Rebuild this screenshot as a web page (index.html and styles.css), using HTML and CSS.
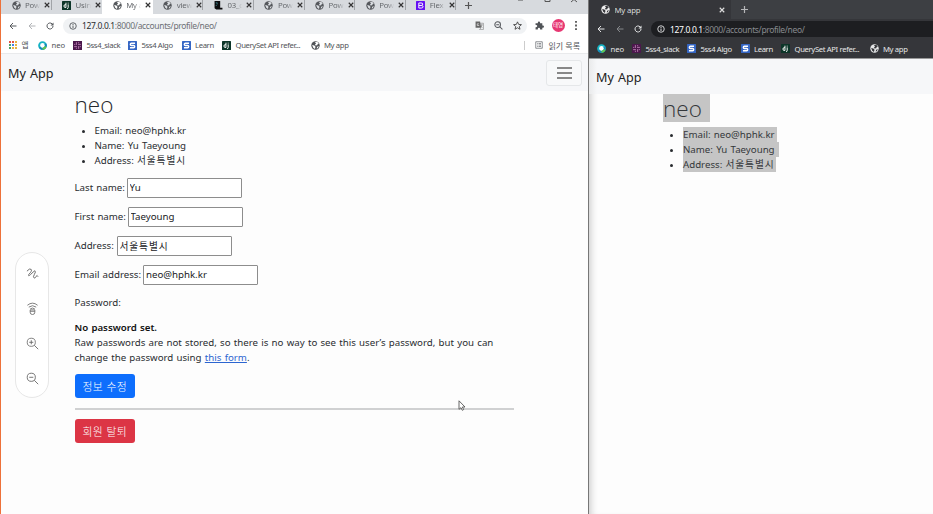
FILE: index.html
```
<!DOCTYPE html>
<html lang="ko">
<head>
<meta charset="utf-8">
<title>My app</title>
<link rel="stylesheet" href="styles.css">
</head>
<body>
<svg class="defs" aria-hidden="true">
  <symbol id="globe" viewBox="0 0 16 16"><circle cx="8" cy="8" r="7.5" fill="currentColor"/><path class="land" d="M2 7l4 1 2 2-1 4-3-2zM7 2l4-.5 3 3-2 1-1 2-3 .5-1-2 2-1zM11 10l3-1-2 4-2 .5z"/></symbol>
  <symbol id="dj" viewBox="0 0 16 16"><rect width="16" height="16" rx="1" fill="#0c3528"/><path d="M7 3v8.500M7 6.500H5.500Q3.500 6.500 3.500 9T5.500 11.500H7M11 6v5.500Q11 13.500 9 13.500M11 3v1.500" fill="none" stroke="#fff" stroke-width="1.700"/></symbol>
  <symbol id="slack" viewBox="0 0 16 16"><rect width="16" height="16" fill="#4b184c"/><path d="M6 2v5M10 2v2M2 6h2M9 6h5M2 10h5M12 10h2M6 12v2M10 9v5" stroke="#b87bb0" stroke-width="1.700"/></symbol>
  <symbol id="s" viewBox="0 0 16 16"><rect width="16" height="16" rx="1" fill="#3566c4"/><path d="M12.500 4H6Q4 4 4 6t2 2h4q2 0 2 2t-2 2H3.500" fill="none" stroke="#fff" stroke-width="2.300"/></symbol>
  <symbol id="ring" viewBox="0 0 16 16"><circle cx="8" cy="8" r="6" fill="#fff" stroke="#15b4c4" stroke-width="3.500"/><path d="M3 11a5.800 5.800 0 0 0 10-6" fill="none" stroke="#1589bd" stroke-width="3.500"/><path d="M8 13.800a5.800 5.800 0 0 0 5.500-4" fill="none" stroke="#65c94b" stroke-width="3.500"/></symbol>
  <symbol id="term" viewBox="0 0 16 16"><path d="M1 0h10v12h4v3H4L1 13z" fill="#0b0b0d"/><path d="M3 3h3M4 5h3M3 8h2" stroke="#4dafbd"/></symbol>
  <symbol id="boot" viewBox="0 0 16 16"><rect width="16" height="16" rx="1" fill="#6610f2"/><path d="M5 3.500h4q3 0 3 2T9.500 8H5m4.500 0q3 0 3 2.200T9.500 12.500H5v-9" fill="none" stroke="#fff" stroke-width="1.700"/></symbol>
  <symbol id="x" viewBox="0 0 16 16"><path d="M2 2l12 12M14 2L2 14" stroke="currentColor" stroke-width="3"/></symbol>
  <symbol id="plus" viewBox="0 0 14 14"><path d="M7 0v14M0 7h14" stroke="currentColor" stroke-width="2.400"/></symbol>
  <symbol id="back" viewBox="0 0 16 16"><path d="M15 8H2M8 2L2 8l6 6" fill="none" stroke="currentColor" stroke-width="2"/></symbol>
  <symbol id="reload" viewBox="0 0 16 16"><path d="M14 8a6 6 0 1 1-2-4.500L14 6" fill="none" stroke="currentColor" stroke-width="2"/><path d="M15 1v6H9z" fill="currentColor"/></symbol>
  <symbol id="info" viewBox="0 0 16 16"><circle cx="8" cy="8" r="6.500" fill="none" stroke="currentColor" stroke-width="1.800"/><path d="M8 7v5M8 4v2" stroke="currentColor" stroke-width="1.900"/></symbol>
  <symbol id="zoomout" viewBox="0 0 16 16"><circle cx="6.500" cy="6.500" r="5" fill="none" stroke="currentColor" stroke-width="var(--sw)"/><path d="M4 6.500h5M10.200 10.200L15 15" stroke="currentColor" class="zl"/></symbol>
  <symbol id="zoomin" viewBox="0 0 16 16"><circle cx="6.500" cy="6.500" r="5" fill="none" stroke="currentColor"/><path d="M4 6.500h5M6.500 4v5M10.200 10.200L15 15" stroke="currentColor" class="zl"/></symbol>
</svg>
<div class="desktop">
  <section class="window light">
    <div class="tabs">
      <div class="tab"><svg><use href="#globe"/></svg><span>Pow</span><svg class="close"><use href="#x"/></svg></div>
      <div class="tab before"><svg><use href="#dj"/></svg><span>Usin</span><svg class="close"><use href="#x"/></svg></div>
      <div class="tab active"><svg><use href="#globe"/></svg><span>My a</span><svg class="close"><use href="#x"/></svg></div>
      <div class="tab"><svg><use href="#globe"/></svg><span>view</span><svg class="close"><use href="#x"/></svg></div>
      <div class="tab"><svg><use href="#term"/></svg><span>03_c</span><svg class="close"><use href="#x"/></svg></div>
      <div class="tab"><svg><use href="#globe"/></svg><span>Pow</span><svg class="close"><use href="#x"/></svg></div>
      <div class="tab"><svg><use href="#globe"/></svg><span>Pow</span><svg class="close"><use href="#x"/></svg></div>
      <div class="tab"><svg><use href="#globe"/></svg><span>Pow</span><svg class="close"><use href="#x"/></svg></div>
      <div class="tab"><svg><use href="#boot"/></svg><span>Flex</span><svg class="close"><use href="#x"/></svg></div>
      <svg class="new"><use href="#plus"/></svg>
      <svg class="controls" viewBox="0 0 66 4"><path d="M2 0h5M29 0v1.500h5V0M55 2l3-2.500L61 2" fill="none" stroke="#555"/></svg>
    </div>
    <div class="toolbar">
      <svg class="nav"><use href="#back"/></svg>
      <svg class="nav forward"><use href="#back"/></svg>
      <svg class="nav"><use href="#reload"/></svg>
      <div class="omnibox">
        <svg><use href="#info"/></svg><span class="url"><b>127.0.0.1</b>:8000/accounts/profile/neo/</span>
        <svg class="act" viewBox="0 0 16 16"><path d="M1 1h8l2 11H1z" fill="#666"/><path d="M9 4h6v11H8l3-3M10 7h4M12 6q0 4-2 5M11 9l2 3" fill="none" stroke="#777"/><path d="M7 5H4v3h3V7" fill="none" stroke="#fff"/></svg>
        <svg class="act z"><use href="#zoomout"/></svg>
        <svg class="act" viewBox="0 0 16 16"><path d="M8 1.500l2 4.500 5 .5-3.800 3.200 1.200 5L8 12l-4.400 2.700 1.200-5L1 6.500 6 6z" fill="none" stroke="#444" stroke-width="1.600"/></svg>
      </div>
      <svg class="puzzle" viewBox="0 0 16 16"><path d="M1 4h4V3a2 2 0 0 1 4 0v1h4v4h1a2 2 0 0 1 0 4h-1v3H9v-1a2 2 0 0 0-4 0v1H1v-4h1a2 2 0 0 0 0-4H1z" fill="#505357"/></svg>
      <span class="avatar">태영</span>
      <svg class="dots" viewBox="0 0 4 12"><path d="M1 1h2v2H1zM1 5h2v2H1zM1 9h2v2H1z" fill="#555"/></svg>
    </div>
    <div class="bookmarks">
      <span class="bm apps"><svg viewBox="0 0 16 16"><path d="M0 2h4M6 2h4" stroke="#e5533d" stroke-width="4"/><path d="M12 2h4M12 8h4M12 14h4M6 14h4" stroke="#e7b543" stroke-width="4"/><path d="M6 8h4" stroke="#4584e9" stroke-width="4"/><path d="M0 8h4M0 14h4" stroke="#4aa265" stroke-width="4"/></svg>앱</span>
      <span class="bm neo"><svg><use href="#ring"/></svg>neo</span>
      <span class="bm sl"><svg><use href="#slack"/></svg>5ss4_slack</span>
      <span class="bm al"><svg><use href="#s"/></svg>5ss4 Algo</span>
      <span class="bm le"><svg><use href="#s"/></svg>Learn</span>
      <span class="bm qs"><svg><use href="#dj"/></svg>QuerySet API refer...</span>
      <span class="bm my"><svg><use href="#globe"/></svg>My app</span>
      <span class="reading"><svg viewBox="0 0 16 16"><path d="M1.500 1.500h13v13h-13zM4 5h1.500M7 5h5M4 8h1.500M7 8h5M4 11h1.500M7 11h5" fill="none" stroke="#5f6368" stroke-width="1.400"/></svg>읽기 목록</span>
    </div>
    <header class="appbar"><a>My App</a><button class="toggler"><i></i><i></i><i></i></button></header>
    <main class="page">
      <h1>neo</h1>
      <ul><li>Email: neo@hphk.kr</li><li>Name: Yu Taeyoung</li><li>Address: <span class="ko">서울특별시</span></li></ul>
      <form>
        <p><label class="l1">Last name:</label><input value="Yu"></p>
        <p><label class="l2">First name:</label><input value="Taeyoung"></p>
        <p><label class="l3">Address:</label><input class="ko" value="서울특별시"></p>
        <p><label class="l4">Email address:</label><input value="neo@hphk.kr"></p>
        <p class="pw">Password:</p>
        <div class="help"><strong>No password set.</strong><br>Raw passwords are not stored, so there is no way to see this user’s password, but you can<br>change the password using <a href="#">this form</a>.</div>
        <button class="btn primary" type="button">정보 수정</button>
      </form>
      <hr>
      <button class="btn danger" type="button">회원 탈퇴</button>
    </main>
    <aside class="tools">
      <svg viewBox="0 0 14 14"><path d="M1 4.500Q4 1 5.500 2.500T3 8Q2 11 5 8t4.500-4q1.500 1-.5 4t0 4q1 0 2-2t2 .5" fill="none" stroke="#666"/></svg>
      <svg viewBox="0 0 14 14"><path d="M1.500 3.500Q7-1 12.500 3.500M3 5.500q4-3 8 0M4.500 7.500q2.500-2 5 0M4.500 8.500h5v2.500q0 2.500-2.500 2.500T4.500 11zM4.500 10h5" fill="none" stroke="#666" stroke-width=".9"/></svg>
      <svg><use href="#zoomin"/></svg>
      <svg><use href="#zoomout"/></svg>
    </aside>
    <svg class="cursor" viewBox="0 0 8 12"><path d="M1 .8v8.500l2-1.600 1.300 2.600 1.300-.7L4.400 7H7z" fill="#fff" stroke="#555" stroke-width=".9"/></svg>
  </section>
  <section class="window dark">
    <div class="tabs">
      <div class="tab active"><svg><use href="#globe"/></svg><span>My app</span><svg class="close"><use href="#x"/></svg></div>
      <svg class="new"><use href="#plus"/></svg>
    </div>
    <div class="toolbar">
      <svg class="nav"><use href="#back"/></svg>
      <svg class="nav forward"><use href="#back"/></svg>
      <svg class="nav"><use href="#reload"/></svg>
      <div class="omnibox"><svg><use href="#info"/></svg><span class="url"><b>127.0.0.1</b>:8000/accounts/profile/neo/</span></div>
    </div>
    <div class="bookmarks">
      <span class="bm neo"><svg><use href="#ring"/></svg>neo</span>
      <span class="bm sl"><svg><use href="#slack"/></svg>5ss4_slack</span>
      <span class="bm al"><svg><use href="#s"/></svg>5ss4 Algo</span>
      <span class="bm le"><svg><use href="#s"/></svg>Learn</span>
      <span class="bm qs"><svg><use href="#dj"/></svg>QuerySet API refer...</span>
      <span class="bm my"><svg><use href="#globe"/></svg>My app</span>
    </div>
    <header class="appbar"><a>My App</a></header>
    <main class="page">
      <h1><mark>neo</mark></h1>
      <ul><li><mark class="m1">Email: neo@hphk.kr</mark></li><li><mark class="m2">Name: Yu Taeyoung</mark></li><li><mark class="m3">Address: <span class="ko">서울특별시</span></mark></li></ul>
    </main>
  </section>
</div>
</body>
</html>
```
FILE: styles.css
```
* { box-sizing: border-box; }
body {
  margin: 0;
  overflow: hidden;
  font: 10px/15px "Noto Sans", "Noto Sans CJK KR", sans-serif;
  color: #292c30;
  --land: #d9dce0;
  --sw: 1;
}
svg { display: block; flex: none; }
.defs { position: absolute; width: 0; height: 0; }
.land { fill: var(--land); }
.zl { stroke-width: var(--sw); }
.desktop { display: flex; width: 933px; height: 514px; }
.window { position: relative; height: 514px; background: #fdfdfd; overflow: hidden; }
.light { width: 589px; border-left: 1px solid #ed7139; border-right: 1px solid #777; }
.dark { flex: 1; box-shadow: inset 7px 0 7px -5px #ccc; --land: #35363a; }
.tabs, .toolbar, .bookmarks, .tab, .bm, .omnibox, .appbar, .reading { display: flex; align-items: center; }

.tabs { height: 14px; background: #d7dade; color: #55585c; }
.tab { width: 50.6px; height: 10px; padding-left: 10.500px; border-right: 1px solid #92959a; flex: none; }
.tab svg { width: 9px; height: 9px; }
.tab span {
  width: 16px; margin-left: 4.500px; overflow: hidden; white-space: nowrap;
  font-size: 7.8px; line-height: 10px; letter-spacing: -.2px; color: #65686c;
  -webkit-mask-image: linear-gradient(90deg, #000 50%, transparent 95%);
}
.tab .close { width: 6px; height: 6px; margin-left: 3px; color: #333; }
.light .tab { position: relative; height: 14px; padding-bottom: 4px; border-right-color: transparent; }
.light .active { background: #fff; --land: #fff; }
.light .tab:not(.before):not(.active)::after { content: ""; position: absolute; right: -1px; top: 0; width: 1px; height: 10px; background: #a1a4a8; }
.new { width: 7px; height: 7px; margin: 0 0 4px 9px; color: #555; }
.controls { width: 66px; height: 4px; margin: 0 0 10px 44px; }

.toolbar { height: 23px; padding-left: 8px; background: #fff; color: #55585c; }
.nav { width: 8px; height: 8px; margin-right: 10.5px; }
.forward { color: #b2b4b7; }
.omnibox { width: 464px; height: 16px; margin-left: -2px; padding: 0 5px 0 6px; border-radius: 8px; background: #f0f2f4; font-size: 8.5px; }
.omnibox > svg { width: 8px; height: 8px; }
.url { margin-left: 5.500px; color: #6d7074; white-space: nowrap; letter-spacing: -.35px; }
.url b { font-weight: 400; color: #2b2d30; }
.omnibox .act { margin-left: 10px; width: 9px; height: 9px; }
.omnibox .url + .act { margin-left: auto; }
.z { --sw: 1.8; }
.puzzle { width: 9px; height: 9px; margin-left: 8px; }
.avatar { width: 13px; height: 13px; border-radius: 50%; margin-left: 8px; background: #e73772; color: #fff; font-size: 5.5px; line-height: 13px; text-align: center; }
.dots { width: 4px; height: 11px; margin-left: 9px; }

.bookmarks { height: 16px; padding-left: 8px; background: #fff; font-size: 7.7px; letter-spacing: -.36px; color: #505357; white-space: nowrap; }
.light .bookmarks { --land: #fff; }
.bm { flex: none; line-height: 12px; }
.bm svg { width: 9px; height: 9px; margin-right: 4.500px; }
.apps { width: 29px; }
.apps svg { width: 8px; height: 8px; }
.neo { width: 35px; }
.sl { width: 55px; }
.al { width: 53.500px; }
.le { width: 40.5px; }
.qs { width: 88.500px; }
.neo { letter-spacing: -.1px; }
.reading { height: 9px; margin-left: auto; margin-right: 8px; padding-left: 10px; border-left: 1px solid #ccc; font-size: 8px; letter-spacing: 0; }
.reading svg { width: 8px; height: 8px; margin-right: 5px; }

.appbar { height: 38px; justify-content: space-between; padding: 1px 6px 0 7px; border-top: 1px solid #e9eaec; background: #f6f7f9; }
.appbar a { font-size: 12.6px; word-spacing: .8px; color: #222; }
.toggler { width: 36px; height: 26px; padding: 0 9.500px; border: 1px solid #e5e7e9; border-radius: 3px; background: #f8f9fa; display: flex; flex-direction: column; justify-content: center; gap: 3.500px; }
.toggler i { height: 1.500px; background: #888; }

.page { width: 439.5px; margin-left: 73.5px; font-size: 9.7px; word-spacing: .7px; }
h1 { margin: 0; height: 32px; font: 300 22.5px/27px "Open Sans", "Noto Sans", sans-serif; color: #25282c; }
ul { margin: 0 0 9px; padding-left: 20px; height: 46px; line-height: 15px; }
.ko { letter-spacing: .9px; }
p { display: flex; align-items: center; height: 19px; margin: 0 0 10px; }
input { width: 115px; height: 20px; padding: 1px 2px; border: 1px solid #8d8d8d; border-radius: 1px; background: #fff; font: inherit; color: #202124; outline: 0; }
label { flex: none; white-space: nowrap; }
.l1 { width: 52px; }
.l2 { width: 53px; }
.l3 { width: 42px; }
.l4 { width: 68.500px; }
.pw { height: 16px; margin-bottom: 10px; }
.help { height: 45px; margin-bottom: 9px; white-space: nowrap; }
.help strong { color: #111; font-weight: 600; }
.help a { color: #2c65d0; }
.btn { display: block; width: 60.500px; height: 24px; padding: 1px 0 0; border: 0; border-radius: 3px; color: #fff; font: 300 10.8px/23px "Noto Sans CJK KR", sans-serif; letter-spacing: .3px; }
.primary { background: #0d6efd; }
.danger { background: #dc3545; }
hr { height: 2px; margin: 10px 0 9px; border: 0; background: #d0d1d2; }

.tools { position: absolute; left: 14px; top: 252px; width: 34px; height: 146px; padding: 14px 0 12px; border: 1px solid #e7e7e7; border-radius: 17px; background: #fff; display: flex; flex-direction: column; align-items: center; justify-content: space-between; color: #666; --sw: 1.1; }
.tools svg { width: 13px; height: 13px; }
.cursor { position: absolute; left: 457px; top: 400px; width: 8px; height: 12px; }

.dark .tabs { height: 19px; background: #3d3f43; color: #aaa; }
.dark .tab { width: 142px; height: 19px; padding-left: 12px; border: 0; background: #35363a; color: #eee; }
.dark .tab span { width: 60px; color: #d9dadb; -webkit-mask-image: none; }
.dark .close { margin-left: auto; margin-right: 6px; color: #ddd; }
.dark .new { margin: 0 0 0 10px; color: #b5b6b8; }
.dark .toolbar { height: 20px; background: #35363a; color: #e4e5e6; }
.dark .forward { color: #85878a; }
.dark .omnibox { flex: 1; width: auto; border-radius: 8px 0 0 8px; background: #1d1e21; }
.dark .url { color: #888b8f; }
.dark .url b { color: #fff; }
.dark .bookmarks { height: 19px; background: #35363a; color: #e5e6e7; }
.dark .appbar { height: 36px; border-top: 1px solid #999; background: linear-gradient(90deg, #e9eaeb, #f6f7f9 8px); }
.dark .page { width: 240px; margin-left: 74px; }
mark { display: inline-block; background: #c5c5c5; color: #34373a; }
h1 mark { width: 47px; height: 28px; line-height: 29px; }
.dark h1 { height: 33px; }
li mark { height: 15px; vertical-align: top; white-space: nowrap; }
.m1 { width: 94px; }
.m2 { width: 96px; }
.m3 { width: 93px; }
```
